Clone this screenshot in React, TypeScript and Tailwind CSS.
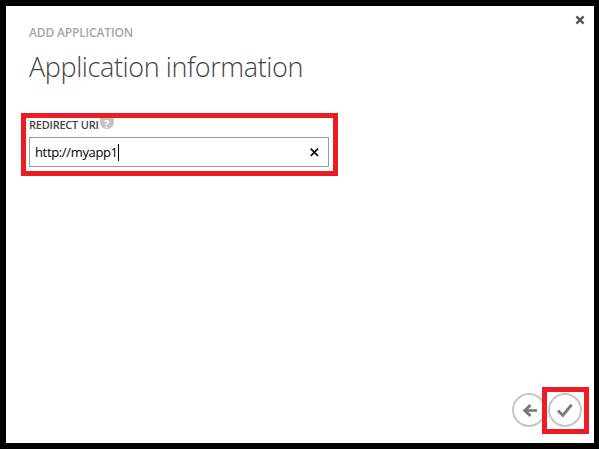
import { useState } from "react";

function CloseIcon() {
  return (
    <svg width="10" height="10" viewBox="0 0 10 10" className="block" aria-hidden="true">
      <path d="M1.4 1.4 8.6 8.6M8.6 1.4 1.4 8.6" stroke="#555" strokeWidth="2.4" fill="none" />
    </svg>
  );
}

function ClearIcon() {
  return (
    <svg width="9" height="9" viewBox="0 0 9 9" className="block" aria-hidden="true">
      <path d="M0.7 0.7 8 8M8 0.7 0.7 8" stroke="#000" strokeWidth="1.7" fill="none" />
    </svg>
  );
}

function BackIcon() {
  return (
    <svg width="34" height="34" viewBox="0 0 34 34" className="block" aria-hidden="true">
      <circle cx="17" cy="17" r="16" fill="#fff" stroke="#c6c6c6" strokeWidth="2" />
      <path d="M25 17.5H13" stroke="#7a7a7a" strokeWidth="2.6" fill="none" />
      <path d="M18.4 12.2 12.8 17.5 18.4 22.8" stroke="#7a7a7a" strokeWidth="3" fill="none" />
    </svg>
  );
}

function CheckIcon() {
  return (
    <svg width="34" height="34" viewBox="0 0 34 34" className="block" aria-hidden="true">
      <circle cx="17" cy="17" r="16" fill="#fff" stroke="#c6c6c6" strokeWidth="2" />
      <path d="M10 17.4 14.8 22.4 23.6 11.8" stroke="#7a7a7a" strokeWidth="2.9" fill="none" />
    </svg>
  );
}

export default function App() {
  const [uri, setUri] = useState("http://myapp1");
  return (
    <div className="h-[449px] w-[599px] bg-black pt-1.5 pr-[5px] pb-1.5 pl-1.5 font-['Open_Sans',sans-serif]">
      <main className="flex h-full flex-col bg-white">
        <header className="flex h-[107px] justify-between pl-[23px]">
          <div className="pt-[18px]">
            <p className="text-[12px] leading-[18px] font-semibold tracking-[-0.16px] text-[#a6a6a6]">
              ADD APPLICATION
            </p>
            <h1 className="mt-1.5 text-[27px] leading-[38px] font-light tracking-[-0.4px] whitespace-nowrap text-[#444]">
              Application information
            </h1>
          </div>
          <button type="button" aria-label="Close" className="mt-[9px] mr-[9px] h-[10px] w-[10px]">
            <CloseIcon />
          </button>
        </header>

        <section className="ml-[15px] h-[63px] w-[317px] border-5 border-[#ed1c24] pl-[3px]">
          <div className="flex h-[19px] items-start">
            <span className="text-[11px] leading-[14px] font-semibold tracking-[-0.23px] text-[#444]">
              REDIRECT URI
            </span>
            <span className="ml-px flex h-[11px] w-[14px] items-center justify-center rounded-b-[7px] bg-[#c3c3c3] text-[11px] leading-[11px] font-bold text-white">
              ?
            </span>
          </div>
          <div className="flex h-[30px] w-[300px] items-center border border-[#999] pr-[9px] pl-[5px]">
            <span className="text-[13px] leading-[18px] tracking-[-0.35px] text-black">{uri}</span>
            <span className="h-[17px] w-px bg-black" />
            <button type="button" aria-label="Clear" onClick={() => setUri("")} className="ml-auto">
              <ClearIcon />
            </button>
          </div>
        </section>

        <footer className="mt-auto flex items-center justify-end pr-[5px] pb-[9px]">
          <button type="button" aria-label="Back" className="-mr-1 mb-[2px]">
            <BackIcon />
          </button>
          <div className="relative flex h-[47px] w-[47px] border-5 border-[#ed1c24] bg-white pt-px pl-px">
            <button type="button" aria-label="Complete" className="h-[34px] w-[34px]">
              <CheckIcon />
            </button>
          </div>
        </footer>
      </main>
    </div>
  );
}
